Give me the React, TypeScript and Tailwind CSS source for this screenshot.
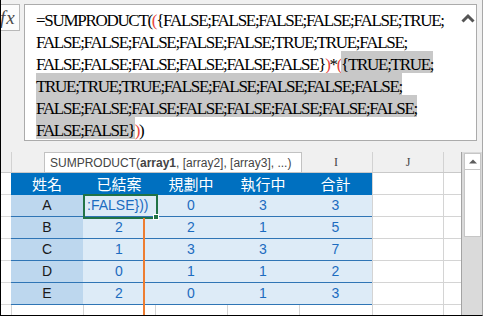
type Seg = { t: string; red?: boolean; hl?: boolean };

const formula: Seg[][] = [
  [{ t: '=SUMPRODUCT(' }, { t: '(', red: true }, { t: '{FALSE;FALSE;FALSE;FALSE;FALSE;TRUE;' }],
  [{ t: 'FALSE;FALSE;FALSE;FALSE;FALSE;TRUE;TRUE;FALSE;' }],
  [
    { t: 'FALSE;FALSE;FALSE;FALSE;FALSE;FALSE}' },
    { t: ')', red: true },
    { t: '*' },
    { t: '(', red: true },
    { t: '{TRUE;TRUE;', hl: true },
  ],
  [{ t: 'TRUE;TRUE;TRUE;FALSE;FALSE;FALSE;FALSE;FALSE;', hl: true }],
  [{ t: 'FALSE;FALSE;FALSE;FALSE;FALSE;FALSE;FALSE;FALSE;', hl: true }],
  [{ t: 'FALSE;FALSE}', hl: true }, { t: ')', red: true }, { t: ')' }],
];

const rows = [
  { name: 'A', v: [':FALSE}))', '0', '3', '3'] },
  { name: 'B', v: ['2', '2', '1', '5'] },
  { name: 'C', v: ['1', '3', '3', '7'] },
  { name: 'D', v: ['0', '1', '1', '2'] },
  { name: 'E', v: ['2', '0', '1', '3'] },
];

const valueWidths = ['w-[72px]', 'w-[72px]', 'w-[72px]', 'w-[73px]'];

const FormulaBar = () => (
  <div className="flex items-start pt-[4px] h-[152px] shrink-0">
    <div className="w-[19px] h-[27px] bg-[#fcfcfc] border border-l-0 border-[#b8b8b8] overflow-hidden flex items-center">
      <span className="ml-[-1px] italic text-[19px] text-[#4a4a4a] font-['Liberation_Serif',serif] leading-none">
        f<span className="ml-[1px]">x</span>
      </span>
    </div>
    <div className="relative ml-[4px] w-[453px] h-[137px] bg-white border border-[#ababab] pl-[11px] pt-[2px] font-['Liberation_Serif',serif] text-[17px] tracking-[-1.3px] text-black">
      {formula.map((line, i) => (
        <div key={i} className="h-[22px] leading-[28px] whitespace-pre">
          {line.map((s, j) =>
            s.hl ? (
              <span key={j} className="inline-block align-top h-[22px] leading-[28px] bg-[#c8c8c8]">
                {s.t}
              </span>
            ) : (
              <span key={j} className={s.red ? 'text-[#e8453c]' : ''}>
                {s.t}
              </span>
            )
          )}
        </div>
      ))}
      <div className="absolute z-10 right-[1px] top-[7px] w-[14px] h-[11px] flex items-center justify-center">
        <svg width="14" height="10" viewBox="0 0 14 10">
          <path d="M1.5 8.5 L7 3 L12.5 8.5" fill="none" stroke="#555555" strokeWidth="3" />
        </svg>
      </div>
    </div>
  </div>
);

const Scrollbar = () => (
  <div className="w-[21px] border-l border-[#a3a3a3] bg-[#dadada] flex flex-col">
    <div className="mt-[1px] ml-[2px] w-[17px] h-[17px] bg-white border border-[#c6c6c6] flex items-center justify-center">
      <svg width="8" height="5" viewBox="0 0 8 5">
        <polygon points="0,4.5 4,0.5 8,4.5" fill="#5c5c5c" />
      </svg>
    </div>
    <div className="ml-[2px] w-[17px] h-[67px] bg-white border border-t-0 border-[#c6c6c6]" />
  </div>
);

export default function App() {
  return (
    <div className="w-[483px] h-[316px] bg-[#f0f0f0] border-l border-b border-r border-l-black border-b-black border-r-[#a8a8a8] overflow-hidden flex flex-col font-['Liberation_Sans',sans-serif]">
      <FormulaBar />

      <div className="relative flex flex-1">
        <div className="w-[460px] flex flex-col">
          {/* column letters (E-H sit under the tooltip) */}
          <div className="flex h-[21px] border-b border-[#c9c9c9] text-[12px] text-[#444] font-['Liberation_Serif',serif]">
            <div className="w-[10px]" />
            <div className="w-[72px] border-l border-[#d2d2d2]" />
            <div className="w-[72px] border-l border-[#d2d2d2]" />
            <div className="w-[72px] border-l border-[#d2d2d2]" />
            <div className="w-[72px] border-l border-[#d2d2d2]" />
            <div className="w-[73px] border-l border-[#d2d2d2] flex items-center justify-center">I</div>
            <div className="w-[71px] border-l border-[#d2d2d2] flex items-center justify-center">J</div>
            <div className="w-[18px] border-l border-[#d2d2d2]" />
          </div>

          {/* table header */}
          <div className="flex h-[22px] font-['Noto_Sans_CJK_TC',sans-serif] text-[15px] text-white">
            <div className="w-[10px] bg-white border-b border-[#d9d9d9]" />
            <div className="w-[72px] bg-[#0070c0] flex items-center justify-center">姓名</div>
            <div className="w-[72px] bg-[#0070c0] flex items-center justify-center">已結案</div>
            <div className="w-[72px] bg-[#0070c0] flex items-center justify-center">規劃中</div>
            <div className="w-[72px] bg-[#0070c0] flex items-center justify-center">執行中</div>
            <div className="w-[73px] bg-[#0070c0] flex items-center justify-center">合計</div>
            <div className="w-[71px] bg-white border-l border-b border-[#d4d4d4]" />
            <div className="w-[18px] bg-white border-l border-b border-[#d4d4d4]" />
          </div>

          {/* data rows */}
          {rows.map((r, i) => (
            <div key={r.name} className="flex h-[22px] text-[14px]">
              <div className="w-[10px] bg-white border-b border-[#d9d9d9]" />
              <div className="w-[72px] bg-[#bdd7ee] border-b border-[#2f75b5] flex items-center justify-center text-[#1a1a1a]">
                {r.name}
              </div>
              {r.v.map((v, j) =>
                i === 0 && j === 0 ? (
                  <div
                    key={j}
                    className="w-[72px] bg-[#ddebf7] border-b border-[#2f75b5] flex items-center pl-[4px] text-[#1c6cc0]"
                  >
                    {v}
                  </div>
                ) : (
                  <div
                    key={j}
                    className={`${valueWidths[j]} bg-[#ddebf7] border-b border-[#2f75b5] flex items-center justify-center text-[#1c6cc0]`}
                  >
                    {v}
                  </div>
                )
              )}
              <div className="w-[71px] bg-white border-l border-b border-[#d4d4d4]" />
              <div className="w-[18px] bg-white border-l border-b border-[#d4d4d4]" />
            </div>
          ))}

          {/* empty row */}
          <div className="flex flex-1 bg-white">
            <div className="w-[10px]" />
            <div className="w-[72px] border-l border-[#d4d4d4]" />
            <div className="w-[72px] border-l border-[#d4d4d4]" />
            <div className="w-[72px] border-l border-[#d4d4d4]" />
            <div className="w-[72px] border-l border-[#d4d4d4]" />
            <div className="w-[73px] border-l border-[#d4d4d4]" />
            <div className="w-[71px] border-l border-[#d4d4d4]" />
            <div className="w-[18px] border-l border-[#d4d4d4]" />
          </div>
        </div>

        <Scrollbar />

        {/* function tooltip */}
        <div className="absolute left-[43px] top-0 w-[258px] h-[21px] bg-white border border-[#c2c2c2] pl-[5px] flex items-center text-[12px] text-[#444] whitespace-pre">
          SUMPRODUCT(<span className="font-bold">array1</span>, [array2], [array3], ...)
        </div>

        {/* active cell */}
        <div className="absolute left-[82px] top-[42px] w-[75px] h-[25px] border-2 border-[#217346]" />
        <div className="absolute left-[152px] top-[62px] w-[6px] h-[6px] bg-[#217346] border border-white" />

        {/* orange guide */}
        <div className="absolute left-[142px] top-[66px] bottom-0 w-[2px] bg-[#ed7d31]" />
      </div>
    </div>
  );
}
